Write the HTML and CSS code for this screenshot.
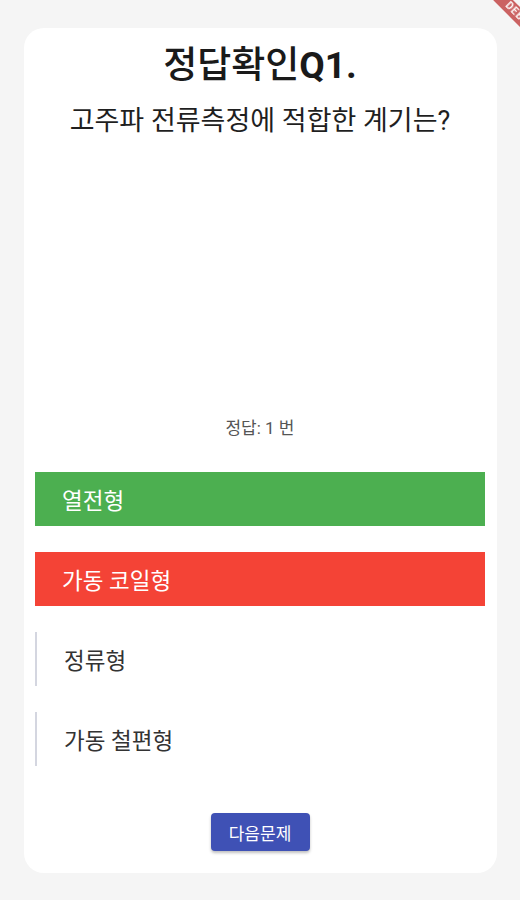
FILE: index.html
```html
<!DOCTYPE html>
<html>
	<head>
		<meta charset="utf-8">
		<meta name="viewport" content="width=device-width, initial-scale=1">
		<title>정답확인</title>
		<link rel="stylesheet" href="styles.css">
	</head>
	<body>
		<div class="debug">DEBUG</div>
		<main class="card">
			<h1 class="title">정답확인<b>Q1.</b></h1>
			<p class="question">고주파 전류측정에 적합한 계기는?</p>
			<p class="answer">정답: 1 번</p>
			<div class="options">
				<div class="option correct">열전형</div>
				<div class="option wrong">가동 코일형</div>
				<div class="option">정류형</div>
				<div class="option">가동 철편형</div>
			</div>
			<div class="actions">
				<button class="next">다음문제</button>
			</div>
		</main>
	</body>
</html>
```

FILE: styles.css
```css
html {
	box-sizing: border-box;
}
*, *:before, *:after {
	box-sizing: inherit;
}
html, body {
	margin: 0;
	padding: 0;
	background-color: #f5f5f5;
	font-family: Roboto, "Noto Sans CJK KR", sans-serif;
	color: #222;
}
body {
	padding: 28px 23px 27px 24px;
	overflow: hidden;
}
.debug {
	position: fixed;
	left: 460px;
	top: 10px;
	width: 120px;
	height: 14px;
	transform: rotate(45deg);
	background-color: rgba(183, 28, 28, 0.68);
	color: white;
	font-size: 10px;
	font-weight: bold;
	line-height: 14px;
	text-align: center;
	letter-spacing: 1px;
}
.card {
	background-color: white;
	border-radius: 20px;
	padding: 16px 12px 21px 11px;
	display: flex;
	flex-direction: column;
	height: 845px;
}
.title {
	margin: 0;
	text-align: center;
	font-size: 37px;
	font-weight: 500;
	line-height: 44px;
	color: #1a1a1a;
}
.title b {
	font-weight: bold;
}
.question {
	margin: 16px 0 0 0;
	text-align: center;
	font-size: 27px;
	line-height: 34px;
	color: #1f1f1f;
}
.answer {
	margin: 279px 0 0 0;
	text-align: center;
	font-size: 17px;
	line-height: 22px;
	color: #555;
}
.options {
	margin-top: 33px;
	display: flex;
	flex-direction: column;
	gap: 26px;
}
.option {
	height: 54px;
	display: flex;
	align-items: center;
	padding-left: 27px;
	font-size: 22.5px;
	color: #333;
	border-left: 2px solid #d4d6e0;
}
.option.correct {
	background-color: #4caf50;
	color: white;
	border-left: none;
}
.option.wrong {
	background-color: #f44336;
	color: white;
	border-left: none;
}
.actions {
	margin-top: 47px;
	display: flex;
	justify-content: center;
}
.next {
	width: 99px;
	height: 38px;
	border: none;
	border-radius: 4px;
	background-color: #3f51b5;
	color: white;
	font-family: inherit;
	font-size: 17px;
	box-shadow: 0 2px 3px rgba(0, 0, 0, 0.25);
}
```
